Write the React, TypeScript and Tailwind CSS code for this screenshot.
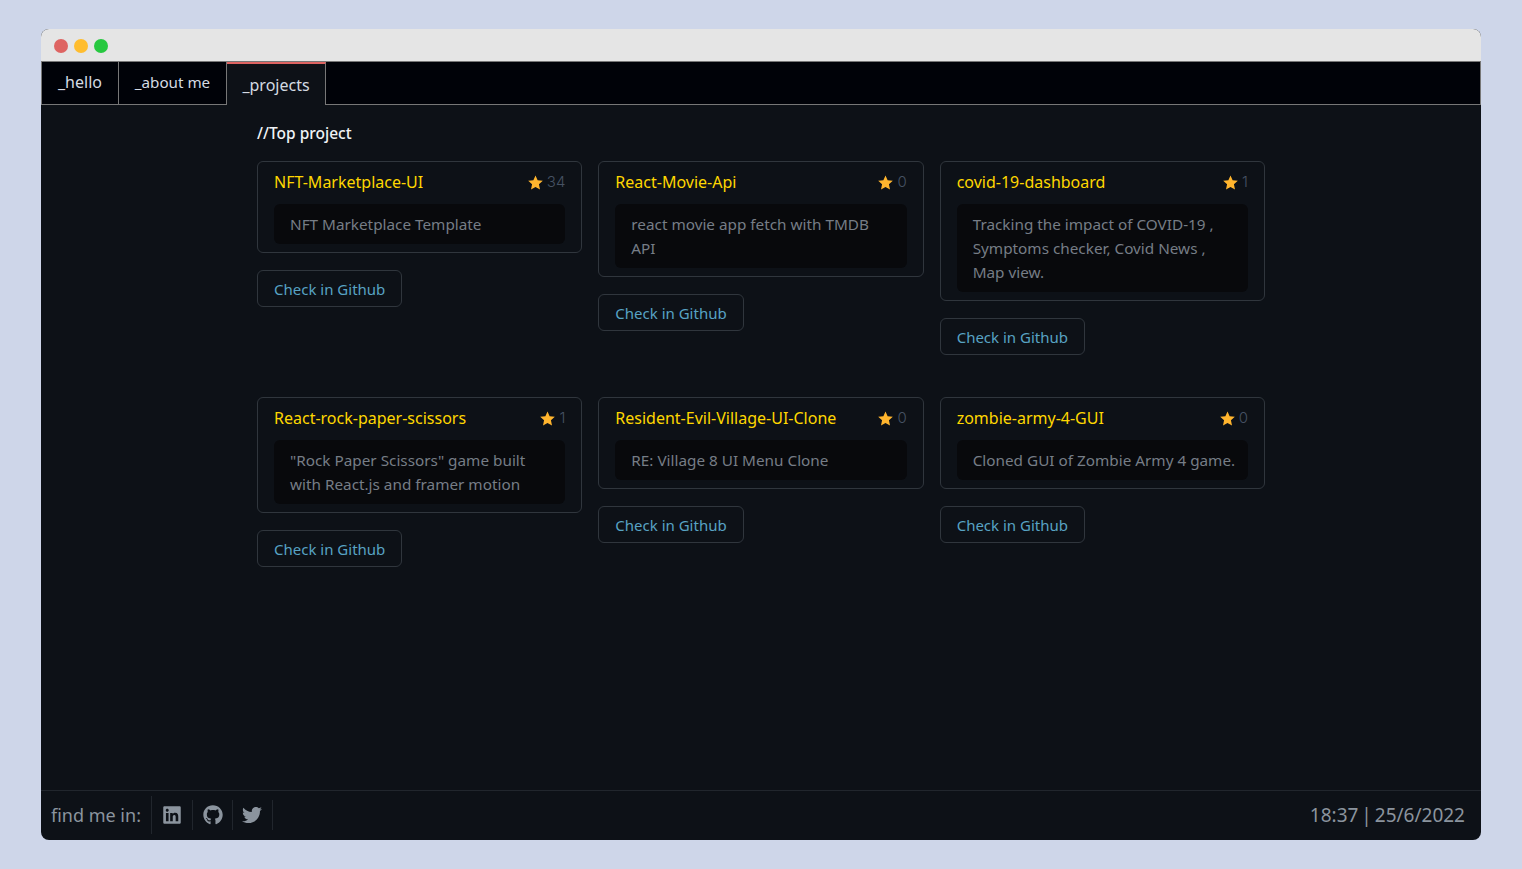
import { FaGithub, FaLinkedin, FaTwitter } from 'react-icons/fa';

type Project = {
  name: string;
  stars: number;
  desc: string;
  oneLine?: boolean;
};

const projects: Project[] = [
  { name: 'NFT-Marketplace-UI', stars: 34, desc: 'NFT Marketplace Template' },
  { name: 'React-Movie-Api', stars: 0, desc: 'react movie app fetch with TMDB API' },
  { name: 'covid-19-dashboard', stars: 1, desc: 'Tracking the impact of COVID-19 , Symptoms checker, Covid News , Map view.' },
  { name: 'React-rock-paper-scissors', stars: 1, desc: '"Rock Paper Scissors" game built with React.js and framer motion' },
  { name: 'Resident-Evil-Village-UI-Clone', stars: 0, desc: 'RE: Village 8 UI Menu Clone' },
  { name: 'zombie-army-4-GUI', stars: 0, desc: 'Cloned GUI of Zombie Army 4 game.', oneLine: true },
];

function StarIcon() {
  return (
    <svg width="15" height="15" viewBox="0 0 24 24" className="fill-[#ffb52e]">
      <path d="M12 .8l3.4 7.6 8.3.9-6.2 5.6 1.7 8.2L12 19l-7.2 4.1 1.7-8.2L.3 9.3l8.3-.9z" />
    </svg>
  );
}

function ProjectCard({ project }: { project: Project }) {
  return (
    <div className="flex flex-col items-start">
      <div className="w-full rounded-md border border-[#30363d] px-4 pt-2 pb-2">
        <div className="flex h-6 items-center justify-between">
          <span className="text-[#ffd700]">{project.name}</span>
          <span className="flex items-center gap-1 font-['Inter',sans-serif] text-[15px] font-light text-[#465163]">
            <StarIcon />
            {project.stars}
          </span>
        </div>
        <p className={project.oneLine
          ? 'mt-[10px] rounded-md bg-[#08090c] px-4 py-2 text-[15.3px] leading-6 whitespace-nowrap text-[#767d86]'
          : 'mt-[10px] rounded-md bg-[#08090c] px-4 py-2 text-[15.3px] leading-6 text-[#767d86]'}>{project.desc}</p>
      </div>
      <a className="mt-[17px] flex h-[37px] items-center rounded-md border border-[#30363d] px-4 pt-px text-[15px] text-[#58a3c4]">Check in Github</a>
    </div>
  );
}

export default function App() {
  return (
    <div className="min-h-screen bg-[#ced6e9] px-[41px] pt-[29px] pb-[29px] font-['Noto_Sans',sans-serif]">
      <div className="flex h-[811px] flex-col overflow-hidden rounded-lg bg-[#0d1117]">
        <div className="flex h-[33px] items-center gap-[6px] border-b border-[#777] bg-[#e5e5e5] pt-[2px] pl-[13px]">
          <span className="h-[14px] w-[14px] rounded-full bg-[#de6462]" />
          <span className="h-[14px] w-[14px] rounded-full bg-[#ffbd2e]" />
          <span className="h-[14px] w-[14px] rounded-full bg-[#27c840]" />
        </div>

        <nav className="flex h-[43px] border-b border-l border-r border-[#777] bg-[#000208] text-[#d5dbe3]">
          <div className="flex w-[77px] items-center justify-center border-r border-[#777] pb-[2px]">_hello</div>
          <div className="flex w-[108px] items-center justify-center border-r border-[#777] pb-[2px] text-[15.2px]">_about me</div>
          <div className="mb-[-1px] flex w-[99px] items-center justify-center border-r border-t-2 border-[#777] border-t-[#de6462] bg-[#0d1117]">_projects</div>
        </nav>

        <main className="flex-1 px-[216px] pt-[17px]">
          <h2 className="h-6 text-[15.5px] font-medium text-[#f0f3f6]">//Top project</h2>
          <div className="mt-[15px] grid w-[1008px] grid-cols-3 gap-x-4 gap-y-[42px]">
            {projects.map(p => (
              <ProjectCard key={p.name} project={p} />
            ))}
          </div>
        </main>

        <footer className="flex h-[50px] items-center justify-between border-t border-[#21262d] pr-4 pb-[2px] pl-[10px] text-[#8b949e]">
          <div className="flex h-full items-center">
            <span className="pr-[10px] text-lg">find me in:</span>
            <div className="flex h-[38px] w-[41px] items-center border-l border-[#21262d] pl-[10px]"><FaLinkedin size={20} /></div>
            <div className="flex h-[30px] w-10 items-center border-l border-[#21262d] pl-[10px]"><FaGithub size={20} /></div>
            <div className="flex h-[30px] w-[41px] items-center border-x border-[#21262d] pl-[9px]"><FaTwitter size={20} /></div>
          </div>
          <span className="pt-[2px] text-[19px] [word-spacing:-2px]">18:37 | 25/6/2022</span>
        </footer>
      </div>
    </div>
  );
}
